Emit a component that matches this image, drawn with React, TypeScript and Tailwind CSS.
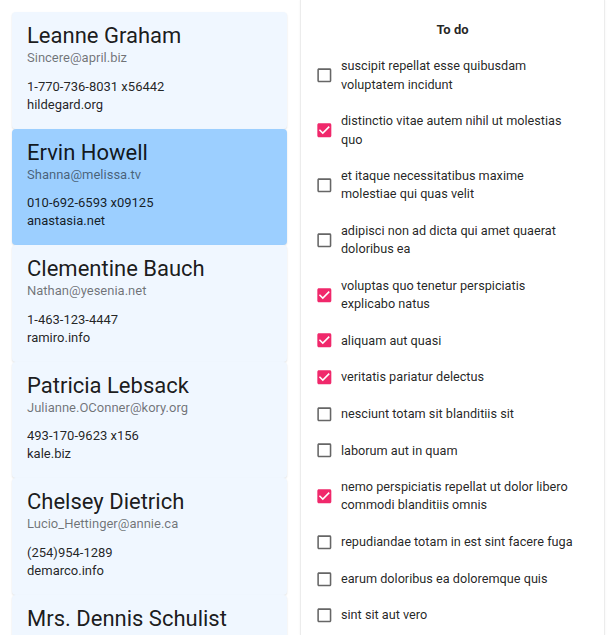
const users = [
  { name: "Leanne Graham", email: "Sincere@april.biz", phone: "1-770-736-8031 x56442", website: "hildegard.org" },
  { name: "Ervin Howell", email: "Shanna@melissa.tv", phone: "010-692-6593 x09125", website: "anastasia.net" },
  { name: "Clementine Bauch", email: "Nathan@yesenia.net", phone: "1-463-123-4447", website: "ramiro.info" },
  { name: "Patricia Lebsack", email: "Julianne.OConner@kory.org", phone: "493-170-9623 x156", website: "kale.biz" },
  { name: "Chelsey Dietrich", email: "Lucio_Hettinger@annie.ca", phone: "(254)954-1289", website: "demarco.info" },
  { name: "Mrs. Dennis Schulist", email: "Karley_Dach@jasper.info", phone: "1-477-935-8478 x6430", website: "ola.org" },
]

const todos = [
  { title: "suscipit repellat esse quibusdam voluptatem incidunt", done: false },
  { title: "distinctio vitae autem nihil ut molestias quo", done: true },
  { title: "et itaque necessitatibus maxime molestiae qui quas velit", done: false },
  { title: "adipisci non ad dicta qui amet quaerat doloribus ea", done: false },
  { title: "voluptas quo tenetur perspiciatis explicabo natus", done: true },
  { title: "aliquam aut quasi", done: true },
  { title: "veritatis pariatur delectus", done: true },
  { title: "nesciunt totam sit blanditiis sit", done: false },
  { title: "laborum aut in quam", done: false },
  { title: "nemo perspiciatis repellat ut dolor libero commodi blanditiis omnis", done: true },
  { title: "repudiandae totam in est sint facere fuga", done: false },
  { title: "earum doloribus ea doloremque quis", done: false },
  { title: "sint sit aut vero", done: false },
  { title: "porro aut necessitatibus eaque distinctio", done: false },
]

function Check({ checked }: { checked: boolean }) {
  if (checked) {
    return (
      <svg viewBox="0 0 24 24" className="w-[18.67px] h-[18.67px] shrink-0" fill="#f0286b">
        <path d="M19 3H5c-1.11 0-2 .9-2 2v14c0 1.1.89 2 2 2h14c1.11 0 2-.9 2-2V5c0-1.1-.89-2-2-2zm-9 14l-5-5 1.41-1.41L10 14.17l7.59-7.59L19 8l-9 9z" />
      </svg>
    )
  }
  return (
    <svg viewBox="0 0 24 24" className="w-[18.67px] h-[18.67px] shrink-0" fill="#666666">
      <path d="M19 5v14H5V5h14m0-2H5c-1.1 0-2 .9-2 2v14c0 1.1.9 2 2 2h14c1.1 0 2-.9 2-2V5c0-1.1-.9-2-2-2z" />
    </svg>
  )
}

export default function App() {
  const selected = 1

  return (
    <div className="flex h-[635px] overflow-hidden bg-white font-['Roboto',sans-serif] text-black/[0.87]">
      <div className="w-[300px] shrink-0 pl-[12px] pr-[13px] pt-[12px]">
        {users.map((u, i) => (
          <div
            key={u.name}
            className={`rounded-[4px] shadow-[0_1px_2px_rgba(0,0,0,0.12)] px-[15px] pt-[10px] pb-[15px] ${
              i === selected ? "bg-[#9ccfff]" : "bg-[#f0f7ff]"
            }`}
          >
            <div className="text-[22px] leading-[28px] text-black/[0.9]">{u.name}</div>
            <div className="text-[13px] leading-[16px] text-black/[0.55]">{u.email}</div>
            <div className="mt-[11.6px] text-[13px] leading-[18px]">{u.phone}</div>
            <div className="text-[13px] leading-[18px]">{u.website}</div>
          </div>
        ))}
      </div>

      <div className="w-[305px] shrink-0 border-x border-[#ececec] shadow-[0_0_2px_rgba(0,0,0,0.06)] pt-[12px]">
        <div className="h-[36.4px] flex items-center justify-center text-[13px] font-bold">To do</div>
        <ul>
          {todos.map((t) => (
            <li key={t.title} className="flex items-center py-[9px] pl-[14.3px]">
              <Check checked={t.done} />
              <span className="ml-[7px] w-[238px] text-[12.7px] leading-[18.4px]">{t.title}</span>
            </li>
          ))}
        </ul>
      </div>
    </div>
  )
}
